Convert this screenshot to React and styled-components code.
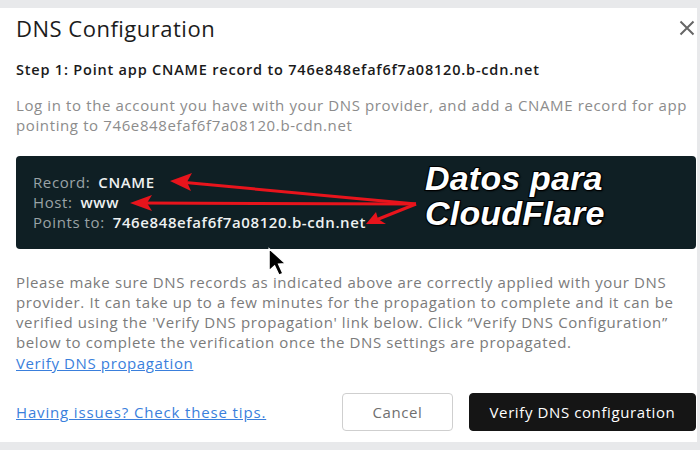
import React from "react";
import styled, { createGlobalStyle } from "styled-components";

const Global = createGlobalStyle`
  html, body { margin: 0; padding: 0; background: #e8e9eb; }
  body { font-family: "Open Sans", "Noto Sans", sans-serif; }
`;

const Page = styled.div`
  width: 700px;
  height: 450px;
  box-sizing: border-box;
  padding: 8px 3px 8px 0;
  display: flex;
`;

const Modal = styled.div`
  flex: 1;
  background: #fff;
  box-sizing: border-box;
  padding: 0 1px 0 16px;
  display: flex;
  flex-direction: column;
  position: relative;
`;

const Header = styled.div`
  display: flex;
  justify-content: space-between;
  align-items: center;
  height: 40px;
`;

const Title = styled.h2`
  margin: 0;
  font-size: 22px;
  font-weight: 400;
  color: #1c1c1c;
  letter-spacing: 0.5px;
`;

const Close = styled.button`
  border: 0;
  background: none;
  padding: 0;
  width: 18px;
  height: 18px;
  display: flex;
  align-items: center;
  justify-content: center;
`;

const Step = styled.h3`
  margin: 12px 0 0;
  font-size: 14.5px;
  font-weight: 600;
  color: #1a1a1a;
  line-height: 20px;
  letter-spacing: 0.8px;
`;

const Para = styled.p`
  margin: ${(p) => p.$mt || 0}px 0 0;
  font-size: 15px;
  line-height: 20.3px;
  letter-spacing: 0.62px;
  color: ${(p) => p.$color || "#8c8c8c"};
`;

const RecordBox = styled.div`
  margin-top: 20px;
  background: #0f1f24;
  border-radius: 4px;
  padding: 16px 17px 17px;
  height: 93px;
  box-sizing: border-box;
  position: relative;
`;

const RecordLine = styled.div`
  font-size: 15px;
  line-height: 20px;
  letter-spacing: 0.6px;
  color: #9aa3a6;
  display: flex;
  gap: 8px;
`;

const Value = styled.span`
  color: #eef1f1;
  font-weight: 600;
  letter-spacing: 0.6px;
`;

const Annotation = styled.div`
  position: absolute;
  left: 409px;
  top: 5px;
  font-family: "Liberation Sans", Arial, sans-serif;
  font-weight: 700;
  font-style: italic;
  font-size: 34px;
  line-height: 35px;
  color: #fff;
  -webkit-text-stroke: 2px #000;
  paint-order: stroke fill;
  text-shadow: 0 0 2px #000, 1px 1px 2px #000;
  letter-spacing: 0.2px;
`;

const Arrows = styled.svg`
  position: absolute;
  left: 0;
  top: 0;
  overflow: visible;
  pointer-events: none;
`;

const Link = styled.a`
  color: #3a7fdc;
  text-decoration: underline;
  font-size: 15px;
  line-height: 20px;
  letter-spacing: ${(p) => p.$ls || 0.62}px;
  cursor: pointer;
`;

const Footer = styled.div`
  margin-top: auto;
  margin-bottom: 11px;
  display: flex;
  align-items: center;
  gap: 16px;
`;

const Spacer = styled.div`
  flex: 1;
`;

const Button = styled.button`
  height: 38px;
  border-radius: 4px;
  font-family: inherit;
  font-size: 15px;
  letter-spacing: 0.6px;
  padding: 0;
  width: ${(p) => p.$w}px;
  background: ${(p) => (p.$primary ? "#151515" : "#fff")};
  color: ${(p) => (p.$primary ? "#fff" : "#6f6f6f")};
  border: 1px solid ${(p) => (p.$primary ? "#151515" : "#cfcfcf")};
`;

const Cursor = styled.svg`
  position: absolute;
  left: 268px;
  top: 239px;
`;

export default function App() {
  return (
    <>
      <Global />
      <Page>
        <Modal>
          <Header>
            <Title>DNS Configuration</Title>
            <Close aria-label="close">
              <svg width="16" height="16" viewBox="0 0 16 16">
                <path d="M1.5 1.5 L14.5 14.5 M14.5 1.5 L1.5 14.5" stroke="#666" strokeWidth="2" />
              </svg>
            </Close>
          </Header>
          <Step>Step 1: Point app CNAME record to 746e848efaf6f7a08120.b-cdn.net</Step>
          <Para $mt={15}>
            Log in to the account you have with your DNS provider, and add a CNAME record for app
            pointing to 746e848efaf6f7a08120.b-cdn.net
          </Para>
          <RecordBox>
            <RecordLine>Record: <Value>CNAME</Value></RecordLine>
            <RecordLine>Host: <Value>www</Value></RecordLine>
            <RecordLine>Points to: <Value>746e848efaf6f7a08120.b-cdn.net</Value></RecordLine>
            <Arrows width="681" height="93">
              <g stroke="#e8141c" strokeWidth="3" fill="none">
                <path d="M400 48 L164 26" />
                <path d="M400 48 L124 47" />
                <path d="M400 48 L360 64" />
              </g>
              <path d="M154 25 L176 17 L171 26 L175 35 Z" fill="#e8141c" />
              <path d="M114 47 L136 39 L131 47 L136 55 Z" fill="#e8141c" />
              <path d="M350 68 L360 56 L362 63 L370 68 Z" fill="#e8141c" />
            </Arrows>
            <Annotation>
              Datos para
              <br />
              CloudFlare
            </Annotation>
          </RecordBox>
          <Para $mt={23} $color="#7b7b7b">
            Please make sure DNS records as indicated above are correctly applied with your DNS
            provider. It can take up to a few minutes for the propagation to complete and it can be
            verified using the 'Verify DNS propagation' link below. Click “Verify DNS Configuration”
            below to complete the verification once the DNS settings are propagated.
            <br />
            <Link>Verify DNS propagation</Link>
          </Para>
          <Footer>
            <Link $ls={0.85}>Having issues? Check these tips.</Link>
            <Spacer />
            <Button $w={111}>Cancel</Button>
            <Button $primary $w={227}>Verify DNS configuration</Button>
          </Footer>
          <Cursor width="22" height="32" viewBox="0 0 20 28">
            <path d="M1 1 L1 21 L6 16.5 L10 25 L13.5 23.5 L9.6 15 L16 14.6 Z" fill="#000" stroke="#fff" strokeWidth="1.2" />
          </Cursor>
        </Modal>
      </Page>
    </>
  );
}
